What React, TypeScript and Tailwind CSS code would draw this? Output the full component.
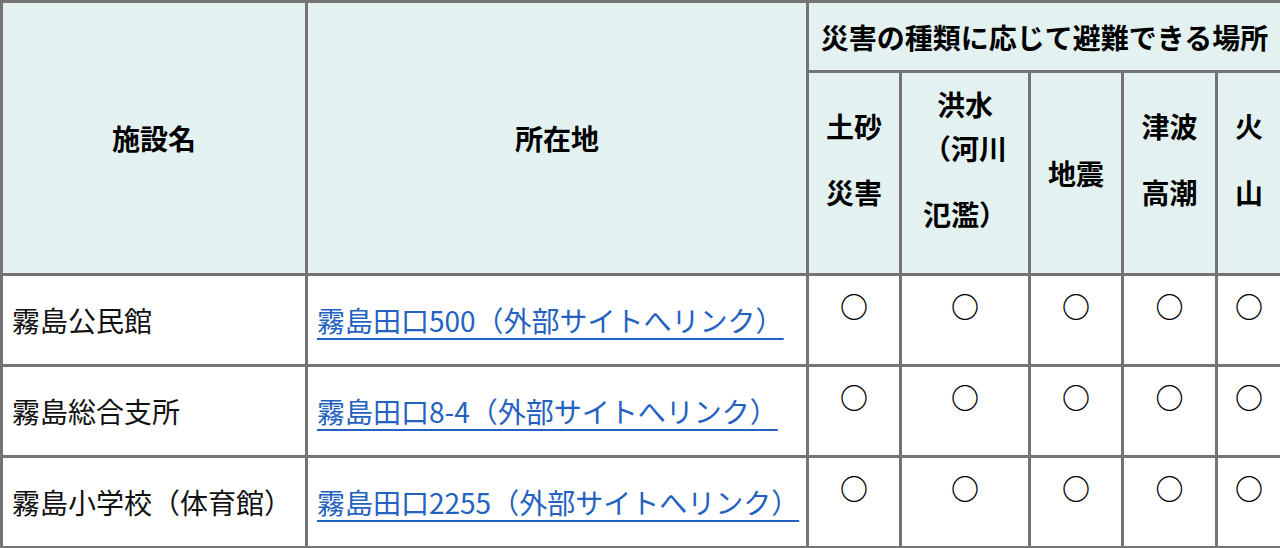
import React from "react";

const font = { fontFamily: '"Noto Sans CJK JP", "Noto Sans", sans-serif' };

const rows = [
  { name: "霧島公民館", addr: "霧島田口500（外部サイトへリンク）" },
  { name: "霧島総合支所", addr: "霧島田口8-4（外部サイトへリンク）" },
  { name: "霧島小学校（体育館）", addr: "霧島田口2255（外部サイトへリンク）" },
];

const th =
  "border-[3px] border-[#747474] bg-[#e3f2f0] font-bold text-black text-center align-middle px-2";
const td = "border-[3px] border-[#747474] bg-white text-[#111] px-[9px]";

export default function App() {
  return (
    <div className="w-[1280px] h-[548px] bg-white overflow-hidden" style={font}>
      <table className="w-[1280px] table-fixed border-collapse text-[28px] leading-[44px]">
        <colgroup>
          <col className="w-[305px]" />
          <col className="w-[501px]" />
          <col className="w-[93px]" />
          <col className="w-[129px]" />
          <col className="w-[93px]" />
          <col className="w-[94px]" />
          <col className="w-[65px]" />
        </colgroup>
        <thead>
          <tr className="h-[70px]">
            <th rowSpan={2} className={th}>
              施設名
            </th>
            <th rowSpan={2} className={th}>
              所在地
            </th>
            <th colSpan={5} className={th + " h-[70px] whitespace-nowrap"}>
              災害の種類に応じて避難できる場所
            </th>
          </tr>
          <tr className="h-[203px]">
            <th className={th + " !px-0 pb-[6px]"}>
              <div className="mb-[22px]">土砂</div>
              <div className="mb-[22px]">災害</div>
            </th>
            <th className={th + " !px-0 pb-[6px]"}>
              <div className="mb-[22px]">
                洪水
                <br />
                （河川
              </div>
              <div className="mb-[22px]">氾濫）</div>
            </th>
            <th className={th + " !px-0"}>地震</th>
            <th className={th + " !px-0 pb-[6px]"}>
              <div className="mb-[22px]">津波</div>
              <div className="mb-[22px]">高潮</div>
            </th>
            <th className={th + " !px-0 pb-[6px]"}>
              <div className="mb-[22px]">火</div>
              <div className="mb-[22px]">山</div>
            </th>
          </tr>
        </thead>
        <tbody>
          {rows.map((r) => (
            <tr key={r.name} className="h-[91px]">
              <td className={td + " align-middle whitespace-nowrap"}>{r.name}</td>
              <td className={td + " align-middle whitespace-nowrap"}>
                <a href="#" className="text-[#2462c1] underline underline-offset-[6px] decoration-[2px]">
                  {r.addr}
                </a>
              </td>
              {[0, 1, 2, 3, 4].map((i) => (
                <td key={i} className={td + " !px-0 align-top text-center pt-[8px] text-black font-semibold"}>
                  ○
                </td>
              ))}
            </tr>
          ))}
        </tbody>
      </table>
    </div>
  );
}
